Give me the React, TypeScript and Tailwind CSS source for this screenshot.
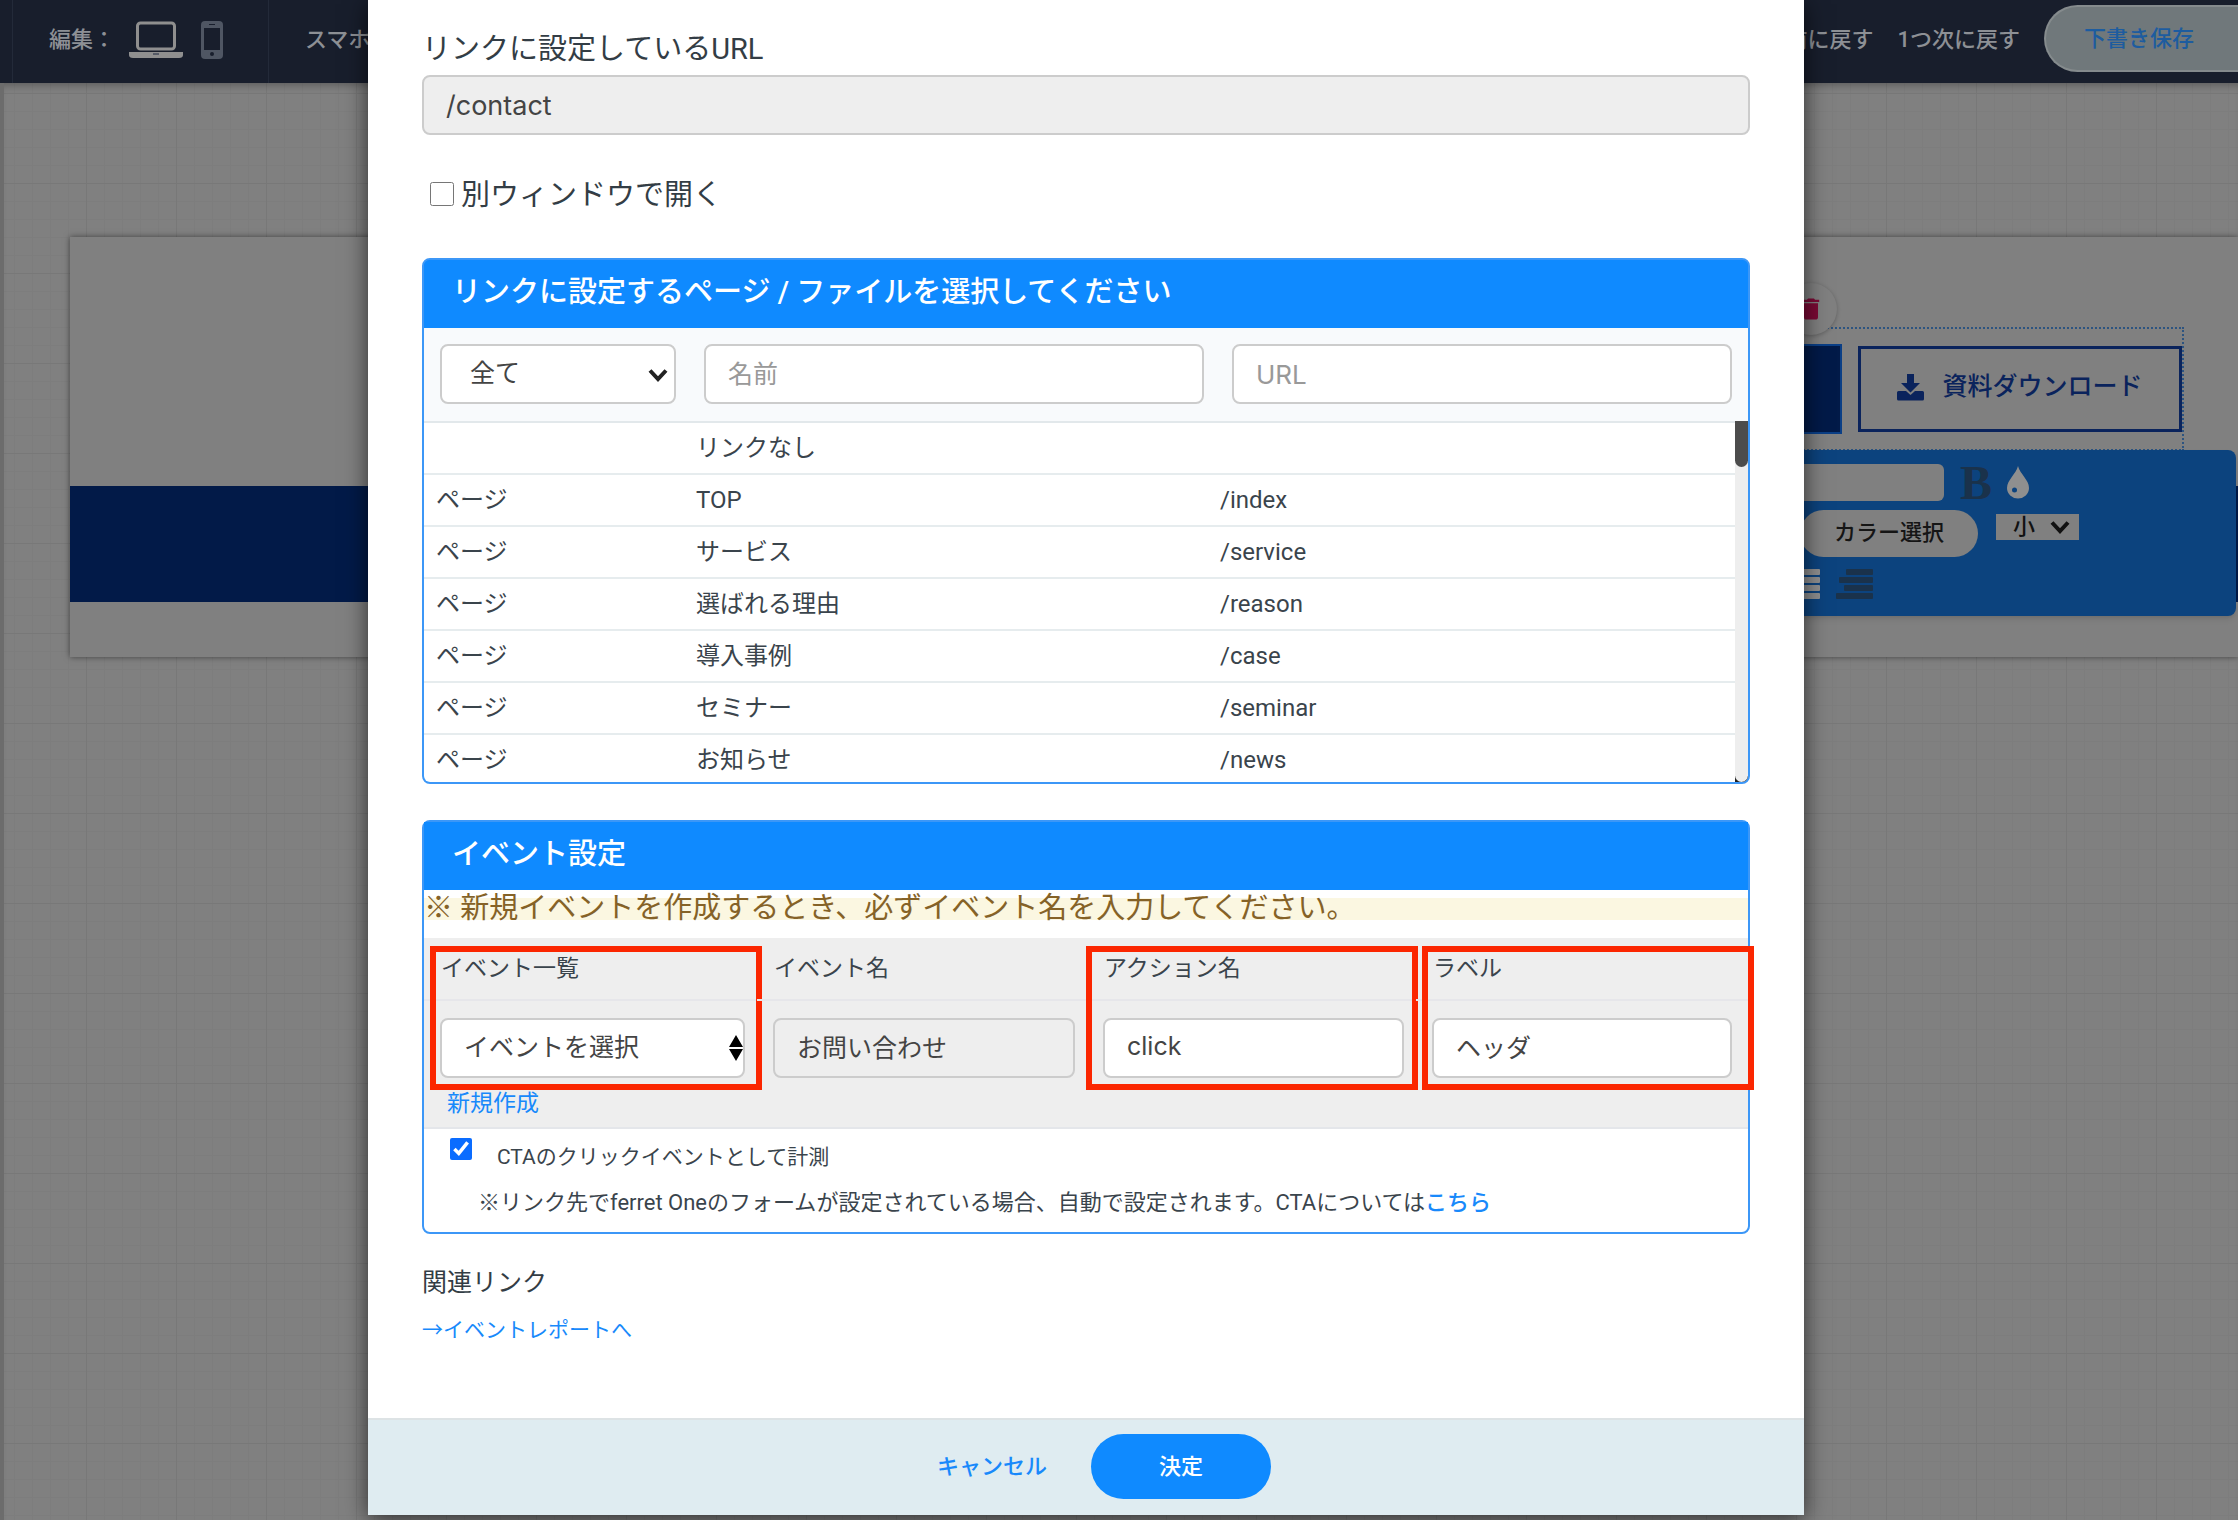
import { MdDelete } from "react-icons/md";

const pages = [
  { kind: "", name: "リンクなし", url: "" },
  { kind: "ページ", name: "TOP", url: "/index" },
  { kind: "ページ", name: "サービス", url: "/service" },
  { kind: "ページ", name: "選ばれる理由", url: "/reason" },
  { kind: "ページ", name: "導入事例", url: "/case" },
  { kind: "ページ", name: "セミナー", url: "/seminar" },
  { kind: "ページ", name: "お知らせ", url: "/news" },
];

const field =
  "h-[60px] w-full min-w-0 rounded-lg border-2 border-[#cccccc] px-[22px] font-['Inter','Noto_Sans_CJK_JP',sans-serif] text-[#444444] placeholder:text-[#999999]";

function Chevron({ className }: { className: string }) {
  return (
    <svg viewBox="0 0 20 14" className={className} fill="none" stroke="currentColor" strokeWidth="4" aria-hidden="true">
      <path d="M2 2.5 L10 11 L18 2.5" />
    </svg>
  );
}

function TopBar() {
  return (
    <header className="relative flex h-[83px] items-center justify-between bg-[#181e2c] text-[22px] font-medium text-[#8d9095]">
      <div className="flex h-full items-center">
        <div className="ml-3 flex h-full items-center border-x border-[#232a39] pb-1 pl-9 pr-[45px]">
          <span>編集：</span>
          <button type="button" aria-label="PC" className="ml-[14px]">
            <svg viewBox="0 0 54 38" className="h-[38px] w-[54px]" fill="#8f8f8f" aria-hidden="true">
              <rect x="8.5" y="2" width="37" height="26" rx="3" fill="none" stroke="#8f8f8f" strokeWidth="3" />
              <path d="M0 31h54v3q0 3-4 3H4q-4 0-4-3z" />
              <rect x="24" y="32" width="6" height="2" fill="#555a66" />
            </svg>
          </button>
          <button type="button" aria-label="スマートフォン" className="ml-[18px]">
            <svg viewBox="0 0 22 38" className="h-[38px] w-[22px]" aria-hidden="true">
              <rect x="0" y="0" width="22" height="38" rx="4" fill="#4f5663" />
              <rect x="3" y="7" width="16" height="22" fill="#181e2c" />
              <circle cx="11" cy="33" r="2" fill="#181e2c" />
              <rect x="8" y="3" width="6" height="1" fill="#181e2c" />
            </svg>
          </button>
        </div>
        <span className="pb-1 pl-9">スマホ表示</span>
      </div>
      <div className="flex h-full items-center gap-6">
        <button type="button" className="pb-1">1つ前に戻す</button>
        <button type="button" className="pb-1">1つ次に戻す</button>
        <button
          type="button"
          className="mb-[6px] h-[67px] rounded-l-full border-2 border-r-0 border-[#858b8d] bg-[#70787b] pl-[38px] pr-11 text-[#1d5c9f]"
        >
          下書き保存
        </button>
      </div>
    </header>
  );
}

function EditorTools() {
  return (
    <div className="absolute right-[2px] top-[213px] h-[166px] w-[700px] rounded-lg bg-[#0c437e] shadow-md">
      <div className="flex items-center justify-end gap-4 pr-[206px] pt-[14px]">
        <input aria-label="テキスト" className="h-[37px] w-[240px] rounded-md bg-[#808080]" />
        <button type="button" aria-label="太字" className="w-[30px] font-['Liberation_Serif',serif] text-[48px] font-bold leading-[37px] text-[#1a324b]">
          B
        </button>
        <button type="button" aria-label="透明度">
          <svg viewBox="0 0 24 33" className="h-[33px] w-6" aria-hidden="true">
            <path d="M12 0 C14 8 23 14 23 22 a11 10.500 0 0 1 -22 0 C1 14 10 8 12 0z" fill="#8f8f8f" />
            <circle cx="8.500" cy="24" r="2.500" fill="#0c437e" />
          </svg>
        </button>
      </div>
      <div className="flex items-start justify-end gap-[18px] pr-[157px] pt-[9px]">
        <button type="button" className="h-[47px] rounded-full bg-[#808080] px-[34px] pb-[2px] text-[22px] font-medium text-[#151515]">
          カラー選択
        </button>
        <div className="relative mt-1">
          <select aria-label="サイズ" className="block h-[26px] w-[83px] appearance-none bg-[#808080] pl-[17px] text-[22px] font-medium leading-[26px] text-[#111111]">
            <option>小</option>
          </select>
          <Chevron className="pointer-events-none absolute right-[9px] top-[6px] h-[14px] w-5 text-[#111111]" />
        </div>
      </div>
      <div className="flex justify-end gap-4 pr-[363px] pt-3">
        <button type="button" aria-label="両端揃え">
          <svg viewBox="0 0 37 30" className="h-[30px] w-[37px]" fill="#8f8f8f" aria-hidden="true">
            <rect width="37" height="6" rx="1" />
            <rect y="8" width="37" height="6" rx="1" />
            <rect y="16" width="37" height="6" rx="1" />
            <rect y="24" width="37" height="6" rx="1" />
          </svg>
        </button>
        <button type="button" aria-label="右揃え">
          <svg viewBox="0 0 37 30" className="h-[30px] w-[37px]" fill="#1a324b" aria-hidden="true">
            <rect x="10" width="27" height="6" rx="1" />
            <rect x="3" y="8" width="34" height="6" rx="1" />
            <rect x="8" y="16" width="29" height="6" rx="1" />
            <rect y="24" width="37" height="6" rx="1" />
          </svg>
        </button>
      </div>
    </div>
  );
}

function Canvas() {
  return (
    <main className="flex-1 border-l-4 border-[#6c6c6c] bg-[#808080] bg-[linear-gradient(to_right,#787878_1px,transparent_1px),linear-gradient(to_bottom,#787878_1px,transparent_1px),linear-gradient(to_right,#7d7d7d_1px,transparent_1px),linear-gradient(to_bottom,#7d7d7d_1px,transparent_1px)] bg-[size:90px_90px,90px_90px,18px_18px,18px_18px] bg-[position:82px_10px,82px_10px,10px_10px,10px_10px] pl-[66px] pt-[154px] shadow-[inset_0_8px_8px_-6px_rgba(0,0,0,0.3)]">
      <section className="relative bg-[#808080] pb-[55px] pt-[249px] shadow-[0_0_6px_rgba(0,0,0,0.5)]">
        <div className="h-[116px] bg-[#021a48]" />
        <div className="absolute right-[54px] top-[90px] h-[124px] w-[600px] border-2 border-dotted border-[#2d5480]">
          <div className="mt-[15px] flex items-start justify-end gap-4">
            <div className="h-[90px] w-[200px] border-2 border-[#0b3f86] bg-[#021a48]" />
            <button
              type="button"
              className="mt-[2px] flex h-[86px] w-[324px] items-center justify-center gap-[18px] border-[3px] border-[#0a235c] pb-1 text-[25px] font-medium text-[#0a235c]"
            >
              <svg viewBox="0 0 27 28" className="h-7 w-[27px]" fill="currentColor" aria-hidden="true">
                <path d="M10 1h7v9h6l-9.500 9.500L4 10h6z" />
                <path d="M1.500 18H9l4.500 4 4.500-4h7.500q1.500 0 1.500 1.500V26q0 1.500-1.500 1.500h-24Q0 27.500 0 26v-6.500Q0 18 1.500 18z" />
              </svg>
              資料ダウンロード
            </button>
          </div>
        </div>
        <button
          type="button"
          aria-label="削除"
          className="absolute right-[401px] top-[46px] flex size-[52px] items-center justify-center rounded-full bg-[#808080] shadow-[0_1px_4px_rgba(0,0,0,0.25)]"
        >
          <MdDelete className="size-7 text-[#7b0a35]" />
        </button>
        <EditorTools />
      </section>
    </main>
  );
}

function PanelTitle({ children }: { children: string }) {
  return (
    <h2 className="flex h-[68px] items-center bg-[#0f8aff] pb-[3px] pl-7 text-[29px] font-medium text-white">
      {children}
    </h2>
  );
}

function LinkPanel() {
  return (
    <section className="mt-[43px] overflow-hidden rounded-lg border-2 border-[#3c97f7] bg-[#0f8aff]">
      <PanelTitle>リンクに設定するページ / ファイルを選択してください</PanelTitle>
      <div className="flex gap-7 bg-[#f8fafc] px-4 pb-[17px] pt-4">
        <div className="relative w-[236px]">
          <select aria-label="種類" className={`${field} appearance-none bg-white pl-7 text-[25px]`}>
            <option>全て</option>
          </select>
          <Chevron className="pointer-events-none absolute right-[8px] top-6 h-[14px] w-5 text-[#222222]" />
        </div>
        <div className="flex flex-1 gap-7">
          <input aria-label="名前" placeholder="名前" className={`${field} flex-1 bg-white text-[25px]`} />
          <input aria-label="URL" placeholder="URL" className={`${field} flex-1 bg-white text-[26px]`} />
        </div>
      </div>
      <div className="flex h-[361px] overflow-hidden bg-white">
        <table className="h-fit flex-1 table-fixed border-collapse border-t-2 border-[#e2e8eb] text-[24px] text-[#3a444c]">
          <colgroup>
            <col className="w-[260px]" />
            <col className="w-[524px]" />
            <col />
          </colgroup>
          <tbody>
            {pages.map((p) => (
              <tr key={p.name} className="h-[52px] border-b-2 border-[#e6ecee]">
                <td className="pl-3">{p.kind}</td>
                <td className="pl-3">{p.name}</td>
                <td className="pl-3">{p.url}</td>
              </tr>
            ))}
          </tbody>
        </table>
        <div className="w-[13px] bg-[#222222]">
          <div className="h-full rounded-b-lg bg-[#eeeeee]">
            <div className="h-[46px] rounded-b-lg bg-[#4c4c4c]" />
          </div>
        </div>
      </div>
    </section>
  );
}

function Frame({ className }: { className: string }) {
  return (
    <span className={`pointer-events-none absolute top-[8px] h-[144px] w-[332px] border-[6px] border-[#fb2600] ${className}`} />
  );
}

const cellLabel = "flex h-[63px] items-center border-b-2 border-[#e6e6ea] pl-[17px] pt-[2px] text-[23px] text-[#3a444c]";
const cellField = "relative pb-[5px] pl-4 pr-3 pt-[17px]";

function EventPanel() {
  return (
    <section className="mt-9 rounded-lg border-2 border-[#3c97f7] bg-white">
      <PanelTitle>イベント設定</PanelTitle>
      <p className="mt-2 h-[22px] bg-[#fbf7e1] text-[29px] leading-[20px] text-[#856227]">
        ※ 新規イベントを作成するとき、必ずイベント名を入力してください。
      </p>
      <div className="mt-[18px] grid grid-cols-[333fr_330fr_329fr_332fr] border-b-2 border-[#e4e6ea] bg-[#eeeeee]">
        <div className="relative">
          <label htmlFor="ev-list" className={cellLabel}>イベント一覧</label>
          <div className={cellField}>
            <select id="ev-list" className={`${field} appearance-none bg-white text-[25px]`}>
              <option>イベントを選択</option>
            </select>
            <svg viewBox="0 0 14 26" className="pointer-events-none absolute right-[14px] top-[34px] h-[26px] w-[14px]" aria-hidden="true">
              <path d="M7 0L14 12H0zM7 26L14 14H0z" fill="#000000" />
            </svg>
            <a href="#new" className="mt-2 block pl-[7px] text-[23px] leading-9 text-[#1889fb]">新規作成</a>
          </div>
          <Frame className="left-[6px]" />
        </div>
        <div className="relative">
          <label htmlFor="ev-name" className={cellLabel}>イベント名</label>
          <div className={cellField}>
            <input id="ev-name" readOnly defaultValue="お問い合わせ" className={`${field} bg-[#eeeeee] pb-1 text-[25px]`} />
          </div>
        </div>
        <div className="relative">
          <label htmlFor="ev-action" className={cellLabel}>アクション名</label>
          <div className={cellField}>
            <input id="ev-action" defaultValue="click" className={`${field} bg-white pb-1 text-[25px]`} />
          </div>
          <Frame className="-left-px" />
        </div>
        <div className="relative">
          <label htmlFor="ev-label" className={cellLabel}>ラベル</label>
          <div className="px-4 pb-[5px] pt-[17px]">
            <input id="ev-label" defaultValue="ヘッダ" className={`${field} bg-white pb-1 text-[25px]`} />
          </div>
          <Frame className="left-[6px]" />
        </div>
      </div>
      <div className="pb-[13px] pl-[26px] leading-8 text-[#3a444c]">
        <div className="flex items-start text-[21px]">
          <input id="cta" type="checkbox" defaultChecked className="mt-[9px] size-[22px] accent-[#0a6cff]" />
          <label htmlFor="cta" className="mt-3 pl-[25px]">CTAのクリックイベントとして計測</label>
        </div>
        <p className="mt-[14px] pl-7 text-[22px]">
          ※リンク先でferret Oneのフォームが設定されている場合、自動で設定されます。CTAについては
          <a href="#cta-help" className="font-medium text-[#1889fb]">こちら</a>
        </p>
      </div>
    </section>
  );
}

export default function App() {
  return (
    <div className="relative flex min-h-screen flex-col overflow-hidden whitespace-nowrap font-['Roboto','Noto_Sans_CJK_JP',sans-serif]">
      <TopBar />
      <Canvas />
      <div className="absolute inset-0 pl-[368px] pr-[434px]">
        <form
          role="dialog"
          aria-label="リンク設定"
          className="bg-white shadow-[0_4px_22px_rgba(0,0,0,0.65)]"
          onSubmit={(e) => e.preventDefault()}
        >
          <div className="px-[54px] pb-[70px] pt-7 text-[#333d45]">
            <label htmlFor="url" className="block text-[29px] leading-[42px]">リンクに設定しているURL</label>
            <input id="url" readOnly defaultValue="/contact" className={`${field} mt-[5px] bg-[#eeeeee] text-[27px]`} />
            <div className="mt-[38px] flex h-[42px] items-center pl-2">
              <input id="blank" type="checkbox" className="size-6" />
              <label htmlFor="blank" className="pl-[7px] pt-[3px] text-[29px]">別ウィンドウで開く</label>
            </div>
            <LinkPanel />
            <EventPanel />
            <h3 className="mt-[29px] text-[25px] leading-10">関連リンク</h3>
            <a href="#report" className="mt-[9px] block w-fit text-[21px] leading-9 text-[#1889fb]">→イベントレポートへ</a>
          </div>
          <footer className="flex items-center justify-center gap-11 border-t-2 border-[#dde3e5] bg-[#dfecf1] pb-4 pl-[36px] pt-[14px] text-[22px] font-medium">
            <button type="button" className="text-[#1889fb]">キャンセル</button>
            <button type="submit" className="h-[65px] w-[180px] rounded-full bg-[#0f8aff] text-white">決定</button>
          </footer>
        </form>
      </div>
    </div>
  );
}
